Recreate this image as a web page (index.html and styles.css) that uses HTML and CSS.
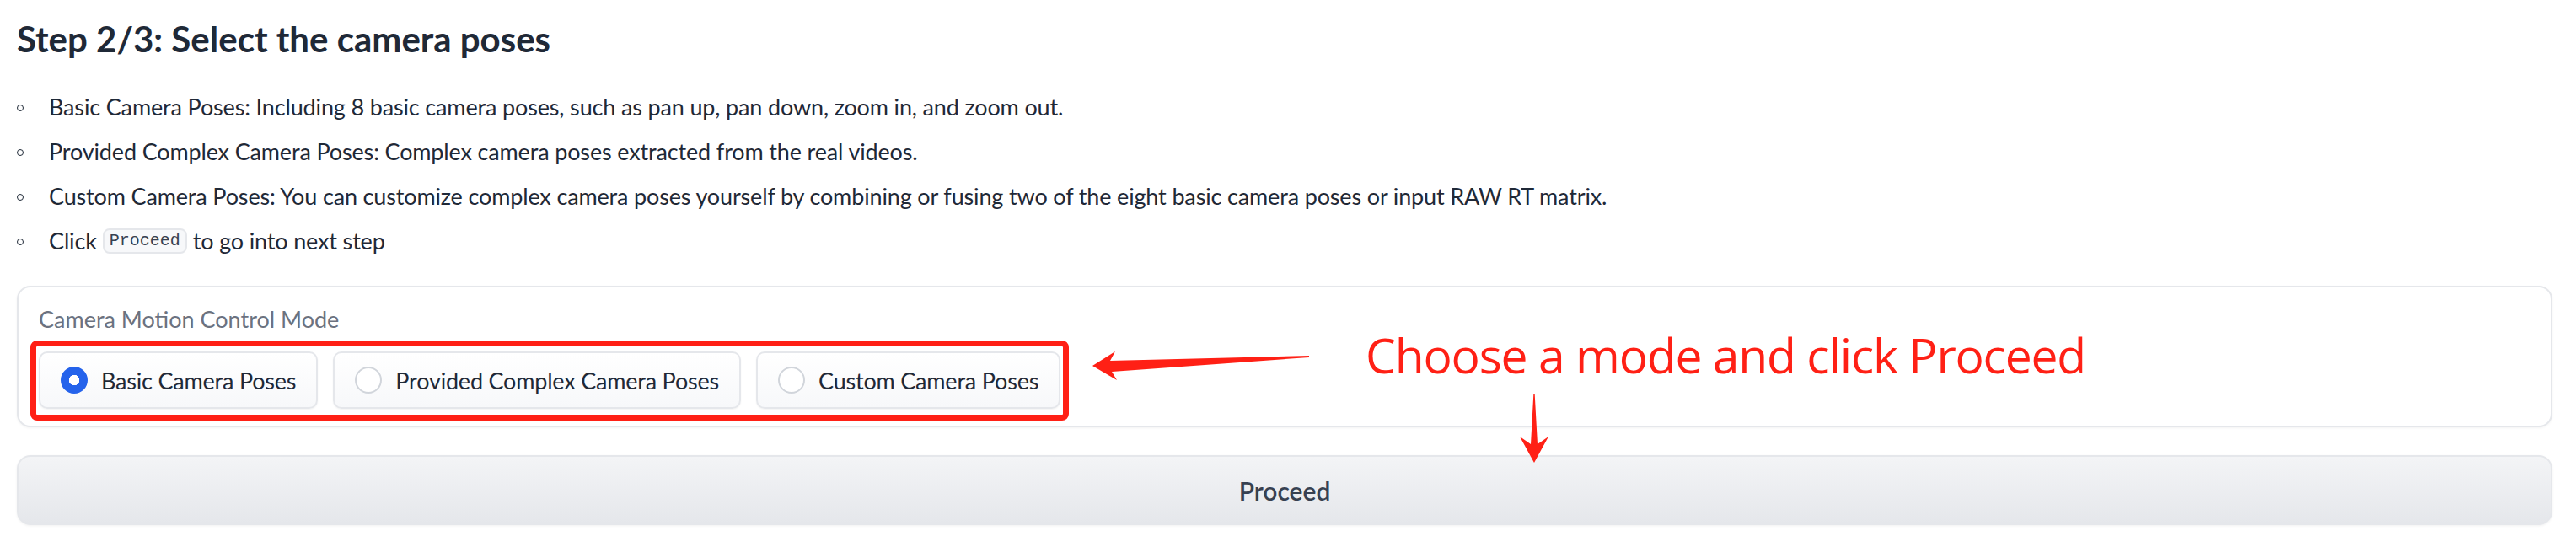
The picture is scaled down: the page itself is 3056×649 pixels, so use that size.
FILE: index.html
```html
<!DOCTYPE html>
<html lang="en">
<head>
<meta charset="utf-8">
<title>Step 2/3: Select the camera poses</title>
<link rel="stylesheet" href="styles.css">
</head>
<body>
<main class="page">
  <h2 class="title">Step 2/3: Select the camera poses</h2>
  <ul class="notes">
    <li>Basic Camera Poses: Including 8 basic camera poses, such as pan up, pan down, zoom in, and zoom out.</li>
    <li>Provided Complex Camera Poses: Complex camera poses extracted from the real videos.</li>
    <li>Custom Camera Poses: You can customize complex camera poses yourself by combining or fusing two of the eight basic camera poses or input RAW RT matrix.</li>
    <li>Click <code class="code">Proceed</code> to go into next step</li>
  </ul>

  <section class="block">
    <div class="block-label">Camera Motion Control Mode</div>
    <div class="radios">
      <label class="radio selected"><span class="dot"></span><span class="radio-text">Basic Camera Poses</span></label>
      <label class="radio"><span class="dot"></span><span class="radio-text">Provided Complex Camera Poses</span></label>
      <label class="radio"><span class="dot"></span><span class="radio-text">Custom Camera Poses</span></label>
    </div>
  </section>

  <button class="proceed" type="button">Proceed</button>
</main>

<div class="anno-box"></div>
<div class="anno-text">Choose a mode and click Proceed</div>
<svg class="anno-arrows" width="3056" height="649" viewBox="0 0 3056 649" xmlns="http://www.w3.org/2000/svg">
  <polygon fill="#ff2015" points="1296,434 1323,417 1317,428 1553,422 1553,424 1319,441 1325,451"/>
  <polygon fill="#ff2015" points="1819.3,468 1820.7,468 1824,527 1837,518 1820,549 1803,518 1816,527"/>
</svg>
</body>
</html>
```

FILE: styles.css
```css
html, body {
  margin: 0;
  padding: 0;
  background: #ffffff;
}

body {
  position: relative;
  width: 3056px;
  height: 649px;
  overflow: hidden;
  font-family: "Lato", "Noto Sans", sans-serif;
  color: #1f2937;
}

.page {
  padding: 14px 28px 0 20px;
}

.title {
  margin: 0;
  font-size: 42px;
  line-height: 64px;
  font-weight: 700;
  color: #1f2937;
}

.notes {
  list-style: none;
  margin: 28px 0 0 0;
  padding: 0;
}

.notes li {
  display: flex;
  align-items: center;
  font-size: 27px;
  line-height: 42px;
  letter-spacing: -0.15px;
  margin-bottom: 11px;
  white-space: nowrap;
}

.notes li:last-child {
  margin-bottom: 0;
}

.notes li::before {
  content: "";
  flex: none;
  width: 8px;
  height: 8px;
  box-sizing: border-box;
  border: 1.6px solid #1f2937;
  border-radius: 50%;
  margin: 2px 30px 0 0;
}

.code {
  display: inline-block;
  font-family: "Liberation Mono", "DejaVu Sans Mono", monospace;
  font-size: 20px;
  line-height: 26px;
  letter-spacing: 0;
  padding: 0 6px;
  margin: 0 7px;
  border: 2px solid #e5e7eb;
  border-radius: 8px;
  background: #f7f8fa;
  color: #374151;
}

.block {
  margin-top: 32px;
  border: 2px solid #e5e7eb;
  border-radius: 16px;
  padding: 20px 24px 20px;
  box-shadow: 0 1px 3px rgba(0, 0, 0, 0.05);
  background: #ffffff;
}

.block-label {
  font-size: 27px;
  line-height: 36px;
  color: #6b7280;
}

.radios {
  display: flex;
  gap: 18px;
  margin-top: 20px;
}

.radio {
  display: flex;
  align-items: center;
  gap: 16px;
  height: 68px;
  box-sizing: border-box;
  padding: 0 24px;
  border: 2px solid #e5e7eb;
  border-radius: 10px;
  background: linear-gradient(180deg, #ffffff 0%, #f7f8fa 100%);
  box-shadow: 0 1px 2px rgba(0, 0, 0, 0.05);
}

.dot {
  flex: none;
  width: 32px;
  height: 32px;
  box-sizing: border-box;
  border: 2px solid #d1d5db;
  border-radius: 50%;
  background: #ffffff;
}

.radio.selected .dot {
  border-color: #2563eb;
  background: radial-gradient(circle, #ffffff 0 6px, #2563eb 6.5px);
}

.radio-text {
  font-size: 27px;
  line-height: 34px;
  letter-spacing: -0.2px;
  padding-top: 2px;
  color: #1f2937;
}

.proceed {
  display: block;
  width: 100%;
  margin-top: 33px;
  height: 83px;
  box-sizing: border-box;
  border: 2px solid #e5e7eb;
  border-radius: 16px;
  background: linear-gradient(180deg, #f3f4f6 0%, #e5e7eb 100%);
  box-shadow: 0 1px 3px rgba(0, 0, 0, 0.06);
  font-family: "Lato", "Noto Sans", sans-serif;
  font-size: 30px;
  font-weight: 600;
  color: #374151;
  padding: 0;
}

.anno-box {
  position: absolute;
  left: 36px;
  top: 404px;
  width: 1232px;
  height: 95px;
  box-sizing: border-box;
  border: 7px solid #ff2015;
  border-radius: 8px;
  pointer-events: none;
}

.anno-text {
  position: absolute;
  left: 1620px;
  top: 393px;
  font-family: "Open Sans", "Noto Sans", sans-serif;
  font-size: 57px;
  line-height: 57px;
  letter-spacing: -1.2px;
  color: #ff2015;
  white-space: nowrap;
}

.anno-arrows {
  position: absolute;
  left: 0;
  top: 0;
  pointer-events: none;
}
```
